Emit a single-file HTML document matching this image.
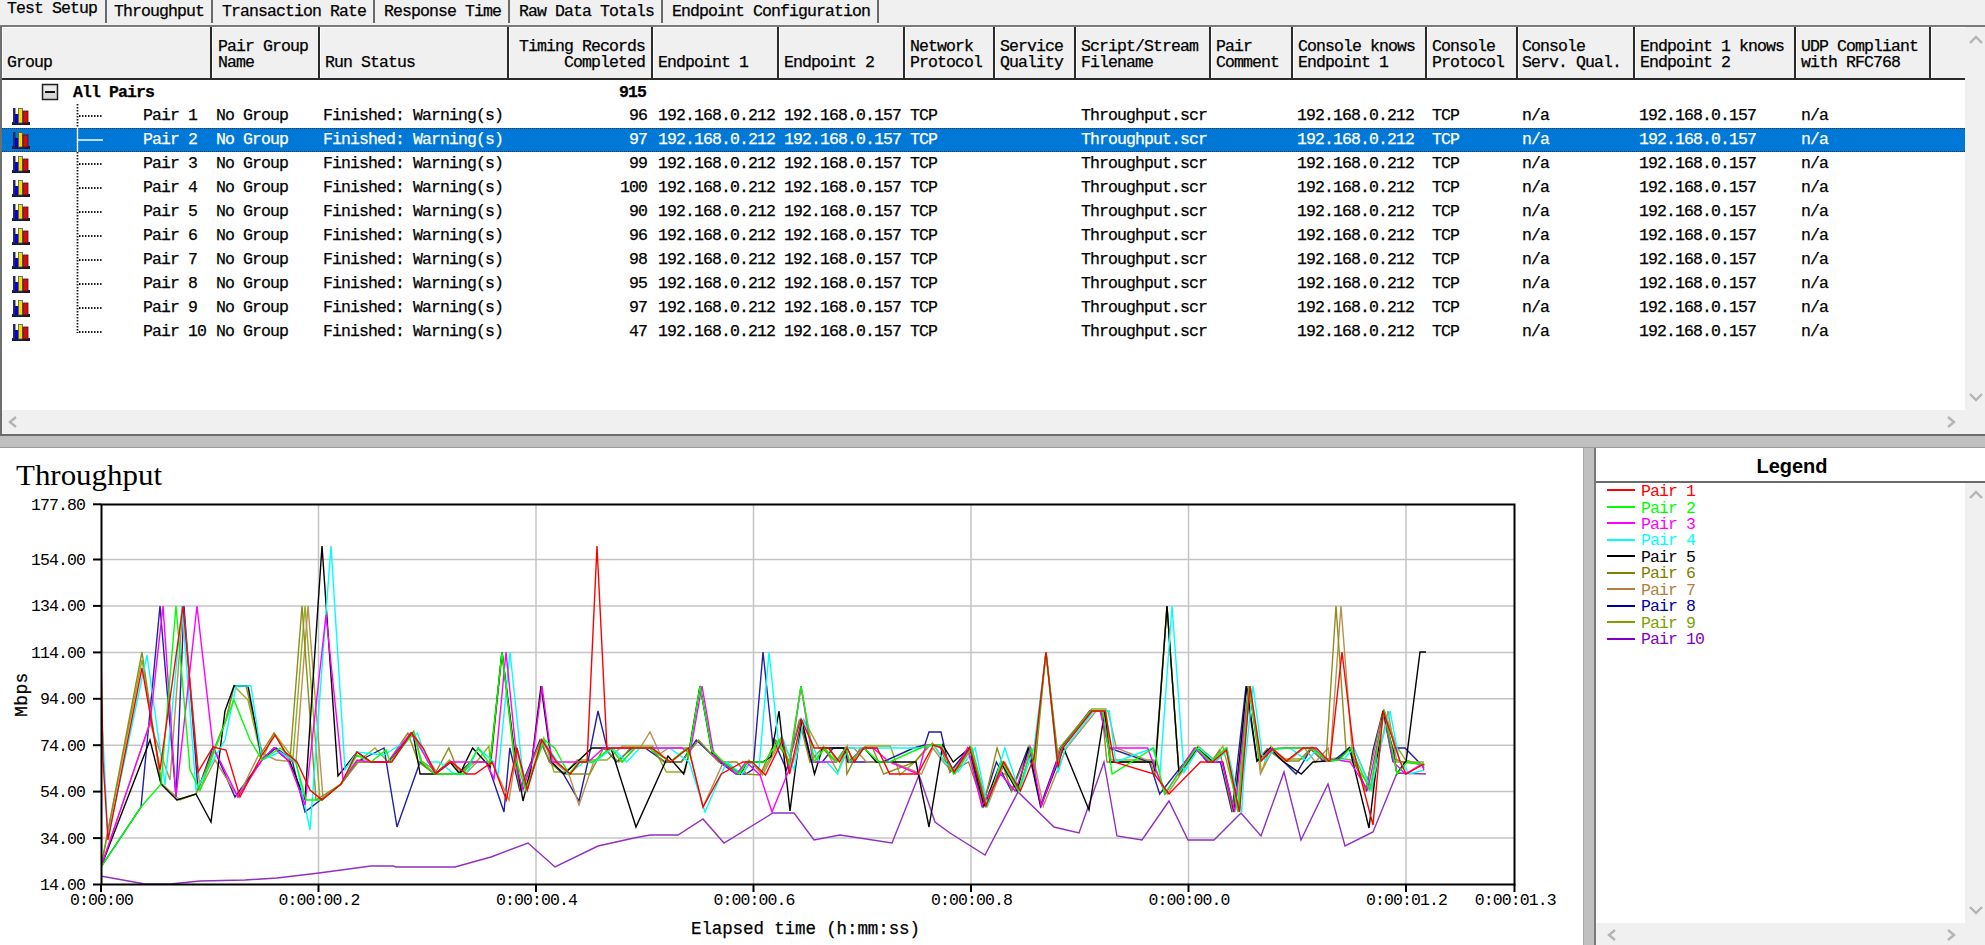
<!DOCTYPE html><html><head><meta charset="utf-8"><style>
*{box-sizing:border-box}
html,body{margin:0;padding:0;width:1985px;height:945px;overflow:hidden;background:#f0f0f0;position:relative}
.a{position:absolute}
.m{position:absolute;font-family:"Liberation Mono",monospace;font-size:16.5px;letter-spacing:-0.9px;-webkit-text-stroke:0.25px currentColor;white-space:pre;line-height:16px;color:#000}
.b{font-weight:bold}
.vl{position:absolute;background:#6a6a6a}
</style></head><body>
<div class="m" style="left:7px;top:1px">Test Setup</div>
<div class="vl" style="left:105px;top:0;width:2px;height:23px"></div>
<div class="m" style="left:114px;top:4px">Throughput</div>
<div class="vl" style="left:211px;top:0;width:2px;height:23px"></div>
<div class="m" style="left:222px;top:4px">Transaction Rate</div>
<div class="vl" style="left:373px;top:0;width:2px;height:23px"></div>
<div class="m" style="left:384px;top:4px">Response Time</div>
<div class="vl" style="left:508px;top:0;width:2px;height:23px"></div>
<div class="m" style="left:519px;top:4px">Raw Data Totals</div>
<div class="vl" style="left:661px;top:0;width:2px;height:23px"></div>
<div class="m" style="left:672px;top:4px">Endpoint Configuration</div>
<div class="vl" style="left:877px;top:0;width:2px;height:23px"></div>
<div class="a" style="left:0;top:25px;width:1985px;height:2px;background:#7a7a7a"></div>
<div class="a" style="left:0;top:26px;width:2px;height:410px;background:#6e6e6e"></div>
<div class="a" style="left:2px;top:80px;width:1963px;height:330px;background:#fff"></div>
<div class="a" style="left:2px;top:27px;width:1963px;height:52px;background:#f0f0f0"></div>
<div class="a" style="left:2px;top:78px;width:1963px;height:2px;background:#2a2a2a"></div>
<div class="a" style="left:2px;top:27px;width:1963px;height:1px;background:#fff"></div>
<div class="a" style="left:2px;top:27px;width:1px;height:51px;background:#fff"></div>
<div class="a" style="left:212px;top:27px;width:1px;height:51px;background:#fff"></div>
<div class="a" style="left:320px;top:27px;width:1px;height:51px;background:#fff"></div>
<div class="a" style="left:509px;top:27px;width:1px;height:51px;background:#fff"></div>
<div class="a" style="left:653px;top:27px;width:1px;height:51px;background:#fff"></div>
<div class="a" style="left:779px;top:27px;width:1px;height:51px;background:#fff"></div>
<div class="a" style="left:905px;top:27px;width:1px;height:51px;background:#fff"></div>
<div class="a" style="left:995px;top:27px;width:1px;height:51px;background:#fff"></div>
<div class="a" style="left:1076px;top:27px;width:1px;height:51px;background:#fff"></div>
<div class="a" style="left:1211px;top:27px;width:1px;height:51px;background:#fff"></div>
<div class="a" style="left:1293px;top:27px;width:1px;height:51px;background:#fff"></div>
<div class="a" style="left:1427px;top:27px;width:1px;height:51px;background:#fff"></div>
<div class="a" style="left:1518px;top:27px;width:1px;height:51px;background:#fff"></div>
<div class="a" style="left:1635px;top:27px;width:1px;height:51px;background:#fff"></div>
<div class="a" style="left:1796px;top:27px;width:1px;height:51px;background:#fff"></div>
<div class="a" style="left:1931px;top:27px;width:1px;height:51px;background:#fff"></div>
<div class="a" style="left:210px;top:27px;width:2px;height:52px;background:#2a2a2a"></div>
<div class="a" style="left:318px;top:27px;width:2px;height:52px;background:#2a2a2a"></div>
<div class="a" style="left:507px;top:27px;width:2px;height:52px;background:#2a2a2a"></div>
<div class="a" style="left:651px;top:27px;width:2px;height:52px;background:#2a2a2a"></div>
<div class="a" style="left:777px;top:27px;width:2px;height:52px;background:#2a2a2a"></div>
<div class="a" style="left:903px;top:27px;width:2px;height:52px;background:#2a2a2a"></div>
<div class="a" style="left:993px;top:27px;width:2px;height:52px;background:#2a2a2a"></div>
<div class="a" style="left:1074px;top:27px;width:2px;height:52px;background:#2a2a2a"></div>
<div class="a" style="left:1209px;top:27px;width:2px;height:52px;background:#2a2a2a"></div>
<div class="a" style="left:1291px;top:27px;width:2px;height:52px;background:#2a2a2a"></div>
<div class="a" style="left:1425px;top:27px;width:2px;height:52px;background:#2a2a2a"></div>
<div class="a" style="left:1516px;top:27px;width:2px;height:52px;background:#2a2a2a"></div>
<div class="a" style="left:1633px;top:27px;width:2px;height:52px;background:#2a2a2a"></div>
<div class="a" style="left:1794px;top:27px;width:2px;height:52px;background:#2a2a2a"></div>
<div class="a" style="left:1929px;top:27px;width:2px;height:52px;background:#2a2a2a"></div>
<div class="m" style="left:7px;top:39px">
Group</div>
<div class="m" style="left:218px;top:39px">Pair Group
Name</div>
<div class="m" style="left:325px;top:39px">
Run Status</div>
<div class="m" style="right:1340px;top:39px;text-align:right">Timing Records
Completed</div>
<div class="m" style="left:658px;top:39px">
Endpoint 1</div>
<div class="m" style="left:784px;top:39px">
Endpoint 2</div>
<div class="m" style="left:910px;top:39px">Network
Protocol</div>
<div class="m" style="left:1000px;top:39px">Service
Quality</div>
<div class="m" style="left:1081px;top:39px">Script/Stream
Filename</div>
<div class="m" style="left:1216px;top:39px">Pair
Comment</div>
<div class="m" style="left:1298px;top:39px">Console knows
Endpoint 1</div>
<div class="m" style="left:1432px;top:39px">Console
Protocol</div>
<div class="m" style="left:1522px;top:39px">Console
Serv. Qual.</div>
<div class="m" style="left:1640px;top:39px">Endpoint 1 knows
Endpoint 2</div>
<div class="m" style="left:1801px;top:39px">UDP Compliant
with RFC768</div>
<div class="a" style="left:2px;top:410px;width:1983px;height:24px;background:#f0f0f0"></div>
<div class="a" style="left:1965px;top:27px;width:20px;height:383px;background:#f0f0f0"></div>
<div class="a" style="left:0;top:434px;width:1985px;height:2px;background:#6b6b6b"></div>
<div class="a" style="left:0;top:436px;width:1985px;height:11px;background:#c0c0c0"></div>
<div class="a" style="left:0;top:447px;width:1985px;height:1px;background:#9a9a9a"></div>
<div class="m b" style="left:73px;top:84.5px">All Pairs</div>
<div class="m b" style="right:1339px;top:84.5px;text-align:right">915</div>
<div class="m" style="left:143px;top:108px;color:#000">Pair 1</div>
<div class="m" style="left:216px;top:108px;color:#000">No Group</div>
<div class="m" style="left:323px;top:108px;color:#000">Finished: Warning(s)</div>
<div class="m" style="right:1338px;top:108px;color:#000">96</div>
<div class="m" style="left:658px;top:108px;color:#000">192.168.0.212</div>
<div class="m" style="left:784px;top:108px;color:#000">192.168.0.157</div>
<div class="m" style="left:910px;top:108px;color:#000">TCP</div>
<div class="m" style="left:1081px;top:108px;color:#000">Throughput.scr</div>
<div class="m" style="left:1297px;top:108px;color:#000">192.168.0.212</div>
<div class="m" style="left:1432px;top:108px;color:#000">TCP</div>
<div class="m" style="left:1522px;top:108px;color:#000">n/a</div>
<div class="m" style="left:1639px;top:108px;color:#000">192.168.0.157</div>
<div class="m" style="left:1801px;top:108px;color:#000">n/a</div>
<div class="a" style="left:2px;top:128px;width:1963px;height:24px;background:#0078d7"></div>
<div class="a" style="left:2px;top:128px;width:1963px;height:24px;border-top:1px dotted #333;border-bottom:1px dotted #333"></div>
<div class="m" style="left:143px;top:132px;color:#fff">Pair 2</div>
<div class="m" style="left:216px;top:132px;color:#fff">No Group</div>
<div class="m" style="left:323px;top:132px;color:#fff">Finished: Warning(s)</div>
<div class="m" style="right:1338px;top:132px;color:#fff">97</div>
<div class="m" style="left:658px;top:132px;color:#fff">192.168.0.212</div>
<div class="m" style="left:784px;top:132px;color:#fff">192.168.0.157</div>
<div class="m" style="left:910px;top:132px;color:#fff">TCP</div>
<div class="m" style="left:1081px;top:132px;color:#fff">Throughput.scr</div>
<div class="m" style="left:1297px;top:132px;color:#fff">192.168.0.212</div>
<div class="m" style="left:1432px;top:132px;color:#fff">TCP</div>
<div class="m" style="left:1522px;top:132px;color:#fff">n/a</div>
<div class="m" style="left:1639px;top:132px;color:#fff">192.168.0.157</div>
<div class="m" style="left:1801px;top:132px;color:#fff">n/a</div>
<div class="m" style="left:143px;top:156px;color:#000">Pair 3</div>
<div class="m" style="left:216px;top:156px;color:#000">No Group</div>
<div class="m" style="left:323px;top:156px;color:#000">Finished: Warning(s)</div>
<div class="m" style="right:1338px;top:156px;color:#000">99</div>
<div class="m" style="left:658px;top:156px;color:#000">192.168.0.212</div>
<div class="m" style="left:784px;top:156px;color:#000">192.168.0.157</div>
<div class="m" style="left:910px;top:156px;color:#000">TCP</div>
<div class="m" style="left:1081px;top:156px;color:#000">Throughput.scr</div>
<div class="m" style="left:1297px;top:156px;color:#000">192.168.0.212</div>
<div class="m" style="left:1432px;top:156px;color:#000">TCP</div>
<div class="m" style="left:1522px;top:156px;color:#000">n/a</div>
<div class="m" style="left:1639px;top:156px;color:#000">192.168.0.157</div>
<div class="m" style="left:1801px;top:156px;color:#000">n/a</div>
<div class="m" style="left:143px;top:180px;color:#000">Pair 4</div>
<div class="m" style="left:216px;top:180px;color:#000">No Group</div>
<div class="m" style="left:323px;top:180px;color:#000">Finished: Warning(s)</div>
<div class="m" style="right:1338px;top:180px;color:#000">100</div>
<div class="m" style="left:658px;top:180px;color:#000">192.168.0.212</div>
<div class="m" style="left:784px;top:180px;color:#000">192.168.0.157</div>
<div class="m" style="left:910px;top:180px;color:#000">TCP</div>
<div class="m" style="left:1081px;top:180px;color:#000">Throughput.scr</div>
<div class="m" style="left:1297px;top:180px;color:#000">192.168.0.212</div>
<div class="m" style="left:1432px;top:180px;color:#000">TCP</div>
<div class="m" style="left:1522px;top:180px;color:#000">n/a</div>
<div class="m" style="left:1639px;top:180px;color:#000">192.168.0.157</div>
<div class="m" style="left:1801px;top:180px;color:#000">n/a</div>
<div class="m" style="left:143px;top:204px;color:#000">Pair 5</div>
<div class="m" style="left:216px;top:204px;color:#000">No Group</div>
<div class="m" style="left:323px;top:204px;color:#000">Finished: Warning(s)</div>
<div class="m" style="right:1338px;top:204px;color:#000">90</div>
<div class="m" style="left:658px;top:204px;color:#000">192.168.0.212</div>
<div class="m" style="left:784px;top:204px;color:#000">192.168.0.157</div>
<div class="m" style="left:910px;top:204px;color:#000">TCP</div>
<div class="m" style="left:1081px;top:204px;color:#000">Throughput.scr</div>
<div class="m" style="left:1297px;top:204px;color:#000">192.168.0.212</div>
<div class="m" style="left:1432px;top:204px;color:#000">TCP</div>
<div class="m" style="left:1522px;top:204px;color:#000">n/a</div>
<div class="m" style="left:1639px;top:204px;color:#000">192.168.0.157</div>
<div class="m" style="left:1801px;top:204px;color:#000">n/a</div>
<div class="m" style="left:143px;top:228px;color:#000">Pair 6</div>
<div class="m" style="left:216px;top:228px;color:#000">No Group</div>
<div class="m" style="left:323px;top:228px;color:#000">Finished: Warning(s)</div>
<div class="m" style="right:1338px;top:228px;color:#000">96</div>
<div class="m" style="left:658px;top:228px;color:#000">192.168.0.212</div>
<div class="m" style="left:784px;top:228px;color:#000">192.168.0.157</div>
<div class="m" style="left:910px;top:228px;color:#000">TCP</div>
<div class="m" style="left:1081px;top:228px;color:#000">Throughput.scr</div>
<div class="m" style="left:1297px;top:228px;color:#000">192.168.0.212</div>
<div class="m" style="left:1432px;top:228px;color:#000">TCP</div>
<div class="m" style="left:1522px;top:228px;color:#000">n/a</div>
<div class="m" style="left:1639px;top:228px;color:#000">192.168.0.157</div>
<div class="m" style="left:1801px;top:228px;color:#000">n/a</div>
<div class="m" style="left:143px;top:252px;color:#000">Pair 7</div>
<div class="m" style="left:216px;top:252px;color:#000">No Group</div>
<div class="m" style="left:323px;top:252px;color:#000">Finished: Warning(s)</div>
<div class="m" style="right:1338px;top:252px;color:#000">98</div>
<div class="m" style="left:658px;top:252px;color:#000">192.168.0.212</div>
<div class="m" style="left:784px;top:252px;color:#000">192.168.0.157</div>
<div class="m" style="left:910px;top:252px;color:#000">TCP</div>
<div class="m" style="left:1081px;top:252px;color:#000">Throughput.scr</div>
<div class="m" style="left:1297px;top:252px;color:#000">192.168.0.212</div>
<div class="m" style="left:1432px;top:252px;color:#000">TCP</div>
<div class="m" style="left:1522px;top:252px;color:#000">n/a</div>
<div class="m" style="left:1639px;top:252px;color:#000">192.168.0.157</div>
<div class="m" style="left:1801px;top:252px;color:#000">n/a</div>
<div class="m" style="left:143px;top:276px;color:#000">Pair 8</div>
<div class="m" style="left:216px;top:276px;color:#000">No Group</div>
<div class="m" style="left:323px;top:276px;color:#000">Finished: Warning(s)</div>
<div class="m" style="right:1338px;top:276px;color:#000">95</div>
<div class="m" style="left:658px;top:276px;color:#000">192.168.0.212</div>
<div class="m" style="left:784px;top:276px;color:#000">192.168.0.157</div>
<div class="m" style="left:910px;top:276px;color:#000">TCP</div>
<div class="m" style="left:1081px;top:276px;color:#000">Throughput.scr</div>
<div class="m" style="left:1297px;top:276px;color:#000">192.168.0.212</div>
<div class="m" style="left:1432px;top:276px;color:#000">TCP</div>
<div class="m" style="left:1522px;top:276px;color:#000">n/a</div>
<div class="m" style="left:1639px;top:276px;color:#000">192.168.0.157</div>
<div class="m" style="left:1801px;top:276px;color:#000">n/a</div>
<div class="m" style="left:143px;top:300px;color:#000">Pair 9</div>
<div class="m" style="left:216px;top:300px;color:#000">No Group</div>
<div class="m" style="left:323px;top:300px;color:#000">Finished: Warning(s)</div>
<div class="m" style="right:1338px;top:300px;color:#000">97</div>
<div class="m" style="left:658px;top:300px;color:#000">192.168.0.212</div>
<div class="m" style="left:784px;top:300px;color:#000">192.168.0.157</div>
<div class="m" style="left:910px;top:300px;color:#000">TCP</div>
<div class="m" style="left:1081px;top:300px;color:#000">Throughput.scr</div>
<div class="m" style="left:1297px;top:300px;color:#000">192.168.0.212</div>
<div class="m" style="left:1432px;top:300px;color:#000">TCP</div>
<div class="m" style="left:1522px;top:300px;color:#000">n/a</div>
<div class="m" style="left:1639px;top:300px;color:#000">192.168.0.157</div>
<div class="m" style="left:1801px;top:300px;color:#000">n/a</div>
<div class="m" style="left:143px;top:324px;color:#000">Pair 10</div>
<div class="m" style="left:216px;top:324px;color:#000">No Group</div>
<div class="m" style="left:323px;top:324px;color:#000">Finished: Warning(s)</div>
<div class="m" style="right:1338px;top:324px;color:#000">47</div>
<div class="m" style="left:658px;top:324px;color:#000">192.168.0.212</div>
<div class="m" style="left:784px;top:324px;color:#000">192.168.0.157</div>
<div class="m" style="left:910px;top:324px;color:#000">TCP</div>
<div class="m" style="left:1081px;top:324px;color:#000">Throughput.scr</div>
<div class="m" style="left:1297px;top:324px;color:#000">192.168.0.212</div>
<div class="m" style="left:1432px;top:324px;color:#000">TCP</div>
<div class="m" style="left:1522px;top:324px;color:#000">n/a</div>
<div class="m" style="left:1639px;top:324px;color:#000">192.168.0.157</div>
<div class="m" style="left:1801px;top:324px;color:#000">n/a</div>
<div class="a" style="left:0;top:448px;width:1583px;height:497px;background:#fff"></div>
<div class="a" style="left:1583px;top:448px;width:13px;height:497px;background:#c0c0c0"></div>
<div class="a" style="left:1583px;top:448px;width:1px;height:497px;background:#a8a8a8"></div>
<div class="a" style="left:1596px;top:448px;width:389px;height:497px;background:#fff"></div>
<svg class="a" style="left:0;top:80px" width="140" height="270" viewBox="0 80 140 270"><rect x="42.5" y="84.5" width="15" height="15" fill="#d8d8d8" stroke="#222" stroke-width="1.5"/><rect x="44" y="86" width="12" height="6" fill="#ececec"/><rect x="45" y="91" width="10" height="2" fill="#111"/><line x1="77.5" y1="104" x2="77.5" y2="333" stroke="#1a1a1a" stroke-width="1.8" stroke-dasharray="1.5 1.5"/><line x1="79" y1="116" x2="103" y2="116" stroke="#1a1a1a" stroke-width="1.8" stroke-dasharray="1.5 1.5"/><g transform="translate(12,107)"><rect x="0" y="15" width="18" height="3" fill="#1a1a3a"/><rect x="1" y="1" width="2.5" height="15" fill="#2a2a5a"/><rect x="3" y="7" width="3.5" height="9" fill="#0000e0"/><rect x="6.5" y="1.5" width="4" height="14.5" fill="#f0e000" stroke="#555" stroke-width="0.8"/><rect x="11" y="4" width="5" height="12" fill="#d01010" stroke="#501010" stroke-width="0.8"/></g><line x1="77.5" y1="128" x2="77.5" y2="152" stroke="#fff" stroke-width="1.5"/><line x1="77" y1="140" x2="103" y2="140" stroke="#fff" stroke-width="1.5"/><g transform="translate(12,131)"><rect x="0" y="15" width="18" height="3" fill="#1a1a3a"/><rect x="1" y="1" width="2.5" height="15" fill="#2a2a5a"/><rect x="3" y="7" width="3.5" height="9" fill="#0000e0"/><rect x="6.5" y="1.5" width="4" height="14.5" fill="#f0e000" stroke="#555" stroke-width="0.8"/><rect x="11" y="4" width="5" height="12" fill="#d01010" stroke="#501010" stroke-width="0.8"/></g><line x1="79" y1="164" x2="103" y2="164" stroke="#1a1a1a" stroke-width="1.8" stroke-dasharray="1.5 1.5"/><g transform="translate(12,155)"><rect x="0" y="15" width="18" height="3" fill="#1a1a3a"/><rect x="1" y="1" width="2.5" height="15" fill="#2a2a5a"/><rect x="3" y="7" width="3.5" height="9" fill="#0000e0"/><rect x="6.5" y="1.5" width="4" height="14.5" fill="#f0e000" stroke="#555" stroke-width="0.8"/><rect x="11" y="4" width="5" height="12" fill="#d01010" stroke="#501010" stroke-width="0.8"/></g><line x1="79" y1="188" x2="103" y2="188" stroke="#1a1a1a" stroke-width="1.8" stroke-dasharray="1.5 1.5"/><g transform="translate(12,179)"><rect x="0" y="15" width="18" height="3" fill="#1a1a3a"/><rect x="1" y="1" width="2.5" height="15" fill="#2a2a5a"/><rect x="3" y="7" width="3.5" height="9" fill="#0000e0"/><rect x="6.5" y="1.5" width="4" height="14.5" fill="#f0e000" stroke="#555" stroke-width="0.8"/><rect x="11" y="4" width="5" height="12" fill="#d01010" stroke="#501010" stroke-width="0.8"/></g><line x1="79" y1="212" x2="103" y2="212" stroke="#1a1a1a" stroke-width="1.8" stroke-dasharray="1.5 1.5"/><g transform="translate(12,203)"><rect x="0" y="15" width="18" height="3" fill="#1a1a3a"/><rect x="1" y="1" width="2.5" height="15" fill="#2a2a5a"/><rect x="3" y="7" width="3.5" height="9" fill="#0000e0"/><rect x="6.5" y="1.5" width="4" height="14.5" fill="#f0e000" stroke="#555" stroke-width="0.8"/><rect x="11" y="4" width="5" height="12" fill="#d01010" stroke="#501010" stroke-width="0.8"/></g><line x1="79" y1="236" x2="103" y2="236" stroke="#1a1a1a" stroke-width="1.8" stroke-dasharray="1.5 1.5"/><g transform="translate(12,227)"><rect x="0" y="15" width="18" height="3" fill="#1a1a3a"/><rect x="1" y="1" width="2.5" height="15" fill="#2a2a5a"/><rect x="3" y="7" width="3.5" height="9" fill="#0000e0"/><rect x="6.5" y="1.5" width="4" height="14.5" fill="#f0e000" stroke="#555" stroke-width="0.8"/><rect x="11" y="4" width="5" height="12" fill="#d01010" stroke="#501010" stroke-width="0.8"/></g><line x1="79" y1="260" x2="103" y2="260" stroke="#1a1a1a" stroke-width="1.8" stroke-dasharray="1.5 1.5"/><g transform="translate(12,251)"><rect x="0" y="15" width="18" height="3" fill="#1a1a3a"/><rect x="1" y="1" width="2.5" height="15" fill="#2a2a5a"/><rect x="3" y="7" width="3.5" height="9" fill="#0000e0"/><rect x="6.5" y="1.5" width="4" height="14.5" fill="#f0e000" stroke="#555" stroke-width="0.8"/><rect x="11" y="4" width="5" height="12" fill="#d01010" stroke="#501010" stroke-width="0.8"/></g><line x1="79" y1="284" x2="103" y2="284" stroke="#1a1a1a" stroke-width="1.8" stroke-dasharray="1.5 1.5"/><g transform="translate(12,275)"><rect x="0" y="15" width="18" height="3" fill="#1a1a3a"/><rect x="1" y="1" width="2.5" height="15" fill="#2a2a5a"/><rect x="3" y="7" width="3.5" height="9" fill="#0000e0"/><rect x="6.5" y="1.5" width="4" height="14.5" fill="#f0e000" stroke="#555" stroke-width="0.8"/><rect x="11" y="4" width="5" height="12" fill="#d01010" stroke="#501010" stroke-width="0.8"/></g><line x1="79" y1="308" x2="103" y2="308" stroke="#1a1a1a" stroke-width="1.8" stroke-dasharray="1.5 1.5"/><g transform="translate(12,299)"><rect x="0" y="15" width="18" height="3" fill="#1a1a3a"/><rect x="1" y="1" width="2.5" height="15" fill="#2a2a5a"/><rect x="3" y="7" width="3.5" height="9" fill="#0000e0"/><rect x="6.5" y="1.5" width="4" height="14.5" fill="#f0e000" stroke="#555" stroke-width="0.8"/><rect x="11" y="4" width="5" height="12" fill="#d01010" stroke="#501010" stroke-width="0.8"/></g><line x1="79" y1="332" x2="103" y2="332" stroke="#1a1a1a" stroke-width="1.8" stroke-dasharray="1.5 1.5"/><g transform="translate(12,323)"><rect x="0" y="15" width="18" height="3" fill="#1a1a3a"/><rect x="1" y="1" width="2.5" height="15" fill="#2a2a5a"/><rect x="3" y="7" width="3.5" height="9" fill="#0000e0"/><rect x="6.5" y="1.5" width="4" height="14.5" fill="#f0e000" stroke="#555" stroke-width="0.8"/><rect x="11" y="4" width="5" height="12" fill="#d01010" stroke="#501010" stroke-width="0.8"/></g></svg>
<svg class="a" style="left:0;top:448px" width="1583" height="497" viewBox="0 448 1583 497"><line x1="102" y1="559.5" x2="1514" y2="559.5" stroke="#c4c4c4" stroke-width="1.5"/><line x1="102" y1="605.9" x2="1514" y2="605.9" stroke="#c4c4c4" stroke-width="1.5"/><line x1="102" y1="652.4" x2="1514" y2="652.4" stroke="#c4c4c4" stroke-width="1.5"/><line x1="102" y1="698.8" x2="1514" y2="698.8" stroke="#c4c4c4" stroke-width="1.5"/><line x1="102" y1="745.2" x2="1514" y2="745.2" stroke="#c4c4c4" stroke-width="1.5"/><line x1="102" y1="791.6" x2="1514" y2="791.6" stroke="#c4c4c4" stroke-width="1.5"/><line x1="102" y1="838.1" x2="1514" y2="838.1" stroke="#c4c4c4" stroke-width="1.5"/><line x1="318.5" y1="505" x2="318.5" y2="884" stroke="#c4c4c4" stroke-width="1.5"/><line x1="536.0" y1="505" x2="536.0" y2="884" stroke="#c4c4c4" stroke-width="1.5"/><line x1="753.5" y1="505" x2="753.5" y2="884" stroke="#c4c4c4" stroke-width="1.5"/><line x1="971.0" y1="505" x2="971.0" y2="884" stroke="#c4c4c4" stroke-width="1.5"/><line x1="1188.5" y1="505" x2="1188.5" y2="884" stroke="#c4c4c4" stroke-width="1.5"/><line x1="1406.0" y1="505" x2="1406.0" y2="884" stroke="#c4c4c4" stroke-width="1.5"/><g clip-path="url(#pc)"><clipPath id="pc"><rect x="102" y="504" width="1412" height="381"/></clipPath><polyline points="101.0,876.0 145.0,884.0 170.0,884.0 200.0,881.0 245.0,880.0 277.0,878.0 319.0,873.0 371.0,866.0 393.0,866.0 396.0,867.0 455.0,867.0 491.0,857.0 528.0,843.0 555.0,867.0 598.0,846.0 634.0,838.0 650.0,835.0 678.0,835.0 703.0,819.0 724.0,843.0 773.0,813.0 794.0,813.0 814.0,840.0 840.0,835.0 892.0,843.0 919.0,775.0 935.0,822.0 950.0,833.0 985.0,855.0 1018.0,792.0 1054.0,827.0 1079.0,833.0 1104.0,762.0 1117.0,836.0 1142.0,840.0 1169.0,801.0 1188.0,840.0 1214.0,840.0 1241.0,813.0 1261.0,836.0 1284.0,772.0 1301.0,840.0 1328.0,784.0 1345.0,846.0 1373.0,832.0 1397.0,773.0 1426.0,774.0" fill="none" stroke="#9030c0" stroke-width="1.4" stroke-linejoin="miter"/><polyline points="101.0,867.0 142.0,660.0 162.0,784.0 180.0,800.0 196.0,794.0 226.0,720.0 234.0,686.0 248.0,700.0 262.0,760.0 274.0,733.0 293.0,758.0 305.0,606.0 320.0,800.0 341.0,784.0 360.0,760.0 375.0,748.0 388.0,762.0 413.8,731.0 420.3,760.0 437.3,772.0 449.4,760.0 461.8,772.0 477.9,760.0 489.0,746.0 490.0,762.4 502.0,652.0 514.0,751.2 516.2,746.0 525.4,788.0 543.8,738.0 554.0,772.0 566.1,772.0 577.0,760.0 589.9,760.0 606.9,760.0 622.4,746.0 634.3,746.0 652.4,746.0 666.4,772.0 685.0,772.0 688.0,757.1 700.0,686.0 712.0,749.5 720.4,760.0 739.6,772.0 748.8,760.0 761.8,773.0 780.9,738.0 789.0,762.5 801.0,686.0 813.0,753.5 817.1,760.0 823.5,746.0 838.0,772.0 847.2,746.0 851.7,760.0 865.6,746.0 878.5,746.0 890.4,746.0 900.0,775.0 916.8,760.0 932.4,743.0 943.7,760.0 953.2,770.0 970.2,746.0 985.1,804.0 1000.3,772.0 1016.0,780.0 1029.3,746.0 1034.0,760.5 1046.0,652.0 1058.0,762.6 1063.0,746.0 1091.6,709.0 1105.8,709.0 1111.0,760.0 1153.8,760.0 1155.0,766.9 1167.0,606.0 1179.0,773.3 1198.0,746.0 1214.4,760.0 1222.7,746.0 1238.9,810.0 1239.0,790.6 1249.0,686.0 1259.0,751.5 1261.3,772.0 1271.0,746.0 1282.7,759.0 1303.0,759.0 1312.1,747.0 1325.2,759.0 1338.9,758.0 1351.0,760.0 1371.0,788.0 1383.7,709.0 1396.3,746.0 1405.6,760.0 1424.0,766.0" fill="none" stroke="#90b020" stroke-width="1.4" stroke-linejoin="miter"/><polyline points="101.0,867.0 141.0,807.0 160.0,606.0 176.0,797.0 184.0,606.0 198.0,790.0 213.0,747.0 235.0,797.0 262.0,760.0 276.0,748.0 292.0,760.0 305.0,812.0 341.0,784.0 357.0,762.0 384.0,748.0 397.0,827.0 420.0,762.0 435.0,774.0 444.6,774.0 457.5,774.0 470.9,762.0 487.0,762.0 504.0,812.0 509.8,748.0 519.7,790.0 540.0,740.0 549.8,762.0 563.3,774.0 579.0,801.0 588.0,761.2 598.0,711.0 608.0,752.0 616.6,762.0 632.2,748.0 645.1,748.0 665.3,762.0 681.4,762.0 696.3,740.0 719.3,762.0 736.1,774.0 745.9,774.0 753.0,769.4 763.0,652.0 773.0,746.2 773.7,740.0 786.6,770.0 800.2,720.0 811.0,762.0 822.3,762.0 833.2,748.0 844.1,748.0 847.5,762.0 859.8,762.0 870.9,762.0 882.8,762.0 913.6,748.0 924.8,745.0 929.0,732.0 941.0,732.0 950.0,772.0 969.1,748.0 982.3,806.0 996.4,762.0 1011.5,791.0 1028.0,748.0 1040.4,806.0 1061.2,748.0 1089.6,711.0 1100.6,711.0 1108.8,748.0 1149.4,762.0 1159.7,794.0 1195.7,748.0 1207.4,762.0 1220.4,762.0 1232.0,812.0 1246.0,686.0 1256.8,761.0 1267.8,749.0 1283.0,761.0 1296.1,774.0 1310.9,749.0 1323.2,761.0 1334.6,760.0 1349.0,748.0 1366.3,790.0 1373.0,750.5 1383.0,711.0 1393.0,762.0 1394.4,748.0 1405.0,748.0 1420.7,764.0 1424.0,768.0" fill="none" stroke="#2020a0" stroke-width="1.4" stroke-linejoin="miter"/><polyline points="101.0,867.0 150.0,723.0 170.0,780.0 183.0,606.0 200.0,790.0 215.0,760.0 238.0,797.0 260.0,752.0 276.0,760.0 296.0,762.0 308.0,606.0 323.0,798.0 341.0,784.0 357.0,762.0 388.0,762.0 413.7,733.0 421.5,748.0 437.7,774.0 453.7,774.0 465.2,774.0 477.1,762.0 492.0,762.0 509.0,800.0 517.1,748.0 527.2,790.0 541.6,740.0 554.5,762.0 568.8,774.0 579.0,805.0 593.6,762.0 610.7,748.0 621.6,762.0 635.6,748.0 640.0,748.0 650.0,732.0 660.0,753.8 668.6,748.0 688.5,748.0 703.0,807.0 723.4,762.0 742.0,774.0 750.9,762.0 762.5,775.0 781.0,740.0 793.2,762.0 804.0,720.0 819.1,748.0 829.1,748.0 836.9,762.0 848.0,748.0 853.8,748.0 866.6,762.0 879.1,762.0 892.0,762.0 921.5,774.0 932.9,748.0 943.2,762.0 955.0,774.0 971.9,748.0 987.5,806.0 1004.9,762.0 1019.0,791.0 1031.5,748.0 1043.3,806.0 1066.4,748.0 1096.2,711.0 1108.0,711.0 1116.3,748.0 1152.0,762.0 1167.3,794.0 1198.2,748.0 1215.5,762.0 1227.1,748.0 1237.9,812.0 1250.4,686.0 1260.4,774.0 1273.0,749.0 1287.6,761.0 1304.5,748.0 1315.4,762.0 1328.1,748.0 1330.0,760.8 1341.0,606.0 1352.0,749.0 1353.9,748.0 1371.9,790.0 1388.0,711.0 1396.8,762.0 1407.9,762.0 1424.0,762.0" fill="none" stroke="#b89050" stroke-width="1.4" stroke-linejoin="miter"/><polyline points="101.0,867.0 142.0,652.0 161.0,784.0 177.0,800.0 196.0,794.0 226.0,720.0 234.0,686.0 246.0,686.0 262.0,752.0 274.0,733.0 290.0,760.0 302.0,606.0 316.0,800.0 341.0,784.0 357.0,762.0 388.0,762.0 407.9,733.0 418.3,762.0 434.9,774.0 448.8,748.0 459.3,774.0 471.4,762.0 487.0,762.0 490.0,771.5 502.0,652.0 514.0,757.3 520.5,790.0 541.1,740.0 549.3,762.0 564.5,774.0 574.6,774.0 589.7,774.0 603.7,748.0 618.6,762.0 630.5,748.0 649.5,748.0 663.8,762.0 681.4,762.0 698.6,740.0 718.6,762.0 736.8,762.0 746.6,774.0 760.1,775.0 775.7,740.0 788.8,762.0 799.3,720.0 809.9,762.0 822.1,748.0 835.7,762.0 845.5,748.0 846.9,774.0 860.1,748.0 872.6,748.0 883.6,774.0 915.0,762.0 928.9,745.0 939.2,745.0 950.1,772.0 968.6,762.0 983.4,806.0 997.1,748.0 1011.7,791.0 1029.7,748.0 1034.0,777.0 1046.0,652.0 1058.0,756.3 1059.4,748.0 1090.1,711.0 1102.0,711.0 1106.9,762.0 1150.4,762.0 1155.0,775.7 1167.0,606.0 1179.0,771.0 1195.3,748.0 1211.3,762.0 1219.5,750.0 1232.8,812.0 1239.0,763.5 1249.0,686.0 1259.0,759.0 1266.9,749.0 1283.1,761.0 1298.8,761.0 1310.1,749.0 1324.6,761.0 1326.0,760.8 1336.0,606.0 1346.0,750.0 1350.0,748.0 1365.2,790.0 1373.0,756.1 1383.0,711.0 1393.0,758.1 1402.0,762.0 1420.2,764.0 1424.0,766.0" fill="none" stroke="#8c8c20" stroke-width="1.4" stroke-linejoin="miter"/><polyline points="101.0,867.0 150.0,740.0 161.0,784.0 177.0,800.0 196.0,794.0 211.0,822.0 225.0,711.0 234.0,686.0 248.0,686.0 262.0,760.0 274.0,748.0 290.0,762.0 305.0,800.0 322.0,546.0 338.0,776.0 357.0,752.0 371.0,762.0 388.0,762.0 412.9,733.0 420.1,774.0 435.0,774.0 450.0,762.0 459.8,774.0 472.6,748.0 490.0,766.8 502.0,652.0 514.0,748.0 514.1,748.0 523.0,801.0 531.0,767.8 541.0,686.0 551.0,758.3 551.7,762.0 563.9,774.0 577.1,762.0 592.0,748.0 611.0,748.0 636.0,827.0 668.0,756.0 683.7,774.0 688.0,757.6 700.0,686.0 712.0,752.6 721.2,762.0 740.4,774.0 747.2,762.0 762.9,762.0 771.0,756.5 779.0,711.0 790.0,811.0 801.7,720.0 814.5,774.0 822.5,748.0 837.1,748.0 843.8,748.0 848.5,762.0 864.3,748.0 876.4,762.0 887.6,762.0 916.0,762.0 929.0,827.0 942.7,745.0 953.2,762.0 969.6,748.0 984.0,806.0 1000.8,762.0 1017.1,791.0 1028.4,748.0 1040.9,806.0 1063.6,748.0 1089.0,810.0 1104.8,711.0 1110.0,762.0 1152.8,762.0 1155.0,771.1 1167.0,606.0 1179.0,773.9 1197.4,748.0 1213.3,762.0 1222.7,762.0 1234.2,812.0 1246.7,686.0 1257.1,761.0 1270.2,748.0 1282.6,761.0 1301.3,774.0 1312.9,762.0 1326.3,761.0 1338.0,760.0 1349.5,748.0 1369.0,828.0 1383.0,711.0 1393.0,750.2 1396.9,774.0 1405.0,762.0 1406.0,762.0 1420.0,652.0 1426.0,652.0" fill="none" stroke="#000000" stroke-width="1.4" stroke-linejoin="miter"/><polyline points="101.0,699.0 108.0,838.0 147.0,655.0 165.0,785.0 182.0,606.0 196.0,790.0 225.0,740.0 236.0,686.0 251.0,686.0 262.0,760.0 280.0,752.0 296.0,762.0 310.0,830.0 331.0,546.0 345.0,770.0 357.0,752.0 384.0,755.0 395.0,748.0 417.4,733.0 427.4,762.0 439.0,762.0 454.4,774.0 466.7,774.0 477.8,748.0 493.8,762.0 498.0,776.2 510.0,652.0 522.0,766.7 526.4,790.0 542.9,740.0 557.8,762.0 568.3,774.0 583.9,762.0 594.6,762.0 612.7,748.0 626.8,762.0 639.7,748.0 655.0,748.0 669.4,748.0 689.2,762.0 705.0,812.0 726.6,762.0 741.7,774.0 750.3,762.0 759.0,768.5 769.0,652.0 779.0,748.2 783.5,740.0 793.9,770.0 803.6,720.0 819.3,762.0 826.8,762.0 837.5,774.0 848.5,748.0 855.9,748.0 867.6,748.0 880.3,748.0 893.8,748.0 919.3,748.0 934.5,745.0 944.3,762.0 957.9,772.0 975.2,748.0 987.4,806.0 1004.8,748.0 1019.3,791.0 1034.0,748.0 1046.0,652.0 1058.0,772.9 1065.4,748.0 1093.7,711.0 1109.3,711.0 1115.7,762.0 1152.8,748.0 1160.0,773.4 1172.0,606.0 1184.0,772.4 1198.8,748.0 1215.7,762.0 1227.4,750.0 1241.7,812.0 1244.0,773.2 1253.0,686.0 1262.0,753.5 1265.4,761.0 1274.6,749.0 1290.0,748.0 1307.0,761.0 1317.2,749.0 1327.1,761.0 1343.2,760.0 1353.9,748.0 1371.0,790.0 1381.0,744.9 1390.0,711.0 1399.0,758.1 1400.4,762.0 1409.7,774.0 1424.0,770.0" fill="none" stroke="#00ffff" stroke-width="1.4" stroke-linejoin="miter"/><polyline points="101.0,867.0 150.0,723.0 163.0,606.0 176.0,797.0 197.0,606.0 213.0,747.0 238.0,797.0 262.0,760.0 274.0,748.0 288.0,760.0 305.0,805.0 326.0,615.0 343.0,780.0 357.0,760.0 371.0,762.0 388.0,762.0 410.7,733.0 420.3,748.0 435.2,774.0 450.4,762.0 462.6,762.0 476.3,762.0 485.7,762.0 494.0,778.6 506.0,652.0 518.0,771.3 522.9,790.0 532.0,762.2 542.0,686.0 552.0,762.0 563.1,762.0 575.0,762.0 588.4,762.0 603.5,748.0 618.4,748.0 631.3,748.0 651.5,748.0 665.3,748.0 681.9,748.0 690.0,753.2 702.0,686.0 714.0,755.7 721.9,762.0 736.5,774.0 746.1,762.0 760.0,775.0 772.0,812.0 789.0,770.0 801.0,686.0 813.0,762.0 823.9,762.0 835.7,762.0 845.7,748.0 848.8,762.0 863.0,748.0 873.1,748.0 889.3,762.0 918.0,774.0 925.8,745.0 938.8,745.0 954.6,772.0 967.5,748.0 981.8,806.0 1000.6,774.0 1015.1,791.0 1030.4,748.0 1041.2,806.0 1062.1,748.0 1092.1,711.0 1100.1,711.0 1108.8,748.0 1147.6,748.0 1165.1,794.0 1194.3,748.0 1209.1,762.0 1222.2,762.0 1234.7,812.0 1248.9,686.0 1260.2,761.0 1270.9,749.0 1283.8,748.0 1299.0,748.0 1313.4,748.0 1326.1,761.0 1337.7,760.0 1350.2,762.0 1367.7,790.0 1384.3,711.0 1393.4,762.0 1405.3,774.0 1421.9,764.0 1424.0,770.0" fill="none" stroke="#ff00ff" stroke-width="1.4" stroke-linejoin="miter"/><polyline points="101.0,867.0 141.0,807.0 161.0,784.0 176.0,606.0 190.0,770.0 200.0,790.0 226.0,720.0 234.0,700.0 250.0,740.0 262.0,760.0 280.0,748.0 295.0,760.0 306.0,800.0 322.0,800.0 341.0,784.0 357.0,755.0 371.0,762.0 386.0,750.0 390.0,762.0 413.5,733.0 421.9,762.0 434.9,774.0 448.5,774.0 463.5,774.0 478.4,748.0 490.0,764.4 502.0,652.0 514.0,753.2 525.6,790.0 544.4,740.0 554.6,748.0 568.9,774.0 579.0,762.0 592.9,762.0 610.4,748.0 622.4,762.0 634.3,748.0 649.1,748.0 669.9,762.0 686.8,748.0 688.0,759.1 700.0,686.0 712.0,751.5 723.9,762.0 739.3,774.0 747.1,762.0 764.7,762.0 778.9,740.0 789.0,764.5 801.0,686.0 813.0,755.5 814.2,762.0 824.7,748.0 836.1,762.0 845.7,748.0 849.8,762.0 863.7,748.0 879.1,762.0 889.4,762.0 920.3,748.0 930.1,745.0 941.3,745.0 953.6,774.0 971.3,748.0 986.3,806.0 1002.1,762.0 1018.5,791.0 1031.3,748.0 1034.0,762.5 1046.0,652.0 1058.0,764.6 1062.2,748.0 1091.0,711.0 1103.0,711.0 1112.1,774.0 1153.7,748.0 1164.5,794.0 1196.6,748.0 1210.9,762.0 1226.1,748.0 1237.8,812.0 1249.0,686.0 1259.8,761.0 1273.2,749.0 1284.7,748.0 1304.4,748.0 1312.8,749.0 1327.9,761.0 1338.9,760.0 1350.7,748.0 1369.8,790.0 1384.4,711.0 1397.0,774.0 1407.3,762.0 1423.9,764.0 1424.0,766.0" fill="none" stroke="#00ff00" stroke-width="1.4" stroke-linejoin="miter"/><polyline points="101.0,652.0 103.0,760.0 108.0,840.0 142.0,668.0 160.0,770.0 183.0,606.0 198.0,772.0 213.0,747.0 226.0,750.0 240.0,797.0 262.0,755.0 275.0,735.0 285.0,752.0 297.0,762.0 310.0,790.0 322.0,800.0 341.0,784.0 357.0,752.0 371.0,762.0 388.0,762.0 391.8,762.0 411.3,733.0 423.2,748.0 435.7,774.0 451.3,762.0 466.5,774.0 475.0,774.0 492.2,762.0 506.4,800.0 516.9,748.0 527.3,790.0 541.9,740.0 556.5,762.0 570.3,774.0 579.7,762.0 587.0,762.0 597.0,546.0 607.0,749.6 611.3,748.0 623.1,748.0 636.6,748.0 651.9,748.0 670.6,762.0 688.5,748.0 703.0,807.0 721.3,774.0 742.9,762.0 752.1,762.0 765.5,775.0 782.6,740.0 789.6,774.0 801.5,720.0 814.2,748.0 828.4,748.0 839.5,762.0 847.1,748.0 854.2,762.0 863.7,748.0 877.1,748.0 889.7,774.0 917.7,774.0 933.4,745.0 941.6,748.0 954.2,772.0 969.7,748.0 985.9,806.0 1003.5,762.0 1020.4,791.0 1032.2,762.0 1034.0,757.7 1046.0,652.0 1058.0,767.3 1062.8,748.0 1091.8,711.0 1105.1,711.0 1114.1,762.0 1154.3,774.0 1169.0,794.0 1200.4,762.0 1212.5,762.0 1226.4,750.0 1239.5,812.0 1250.0,686.0 1261.3,761.0 1272.6,749.0 1286.5,761.0 1302.8,748.0 1316.3,748.0 1328.7,761.0 1330.0,760.8 1342.0,652.0 1354.0,752.4 1373.0,825.0 1383.2,711.0 1400.3,762.0 1406.1,774.0 1424.0,764.0" fill="none" stroke="#ff0000" stroke-width="1.4" stroke-linejoin="miter"/></g><path d="M101.5,504.5 H1514.5 V884.5 H101.5 Z" fill="none" stroke="#000" stroke-width="2"/><line x1="93" y1="504.3" x2="101" y2="504.3" stroke="#000" stroke-width="2"/><line x1="93" y1="559.5" x2="101" y2="559.5" stroke="#000" stroke-width="2"/><line x1="93" y1="605.9" x2="101" y2="605.9" stroke="#000" stroke-width="2"/><line x1="93" y1="652.4" x2="101" y2="652.4" stroke="#000" stroke-width="2"/><line x1="93" y1="698.8" x2="101" y2="698.8" stroke="#000" stroke-width="2"/><line x1="93" y1="745.2" x2="101" y2="745.2" stroke="#000" stroke-width="2"/><line x1="93" y1="791.6" x2="101" y2="791.6" stroke="#000" stroke-width="2"/><line x1="93" y1="838.1" x2="101" y2="838.1" stroke="#000" stroke-width="2"/><line x1="93" y1="884.5" x2="101" y2="884.5" stroke="#000" stroke-width="2"/><line x1="101.0" y1="884" x2="101.0" y2="892" stroke="#000" stroke-width="2"/><line x1="318.5" y1="884" x2="318.5" y2="892" stroke="#000" stroke-width="2"/><line x1="536.0" y1="884" x2="536.0" y2="892" stroke="#000" stroke-width="2"/><line x1="753.5" y1="884" x2="753.5" y2="892" stroke="#000" stroke-width="2"/><line x1="971.0" y1="884" x2="971.0" y2="892" stroke="#000" stroke-width="2"/><line x1="1188.5" y1="884" x2="1188.5" y2="892" stroke="#000" stroke-width="2"/><line x1="1406.0" y1="884" x2="1406.0" y2="892" stroke="#000" stroke-width="2"/><line x1="1514.5" y1="884" x2="1514.5" y2="892" stroke="#000" stroke-width="2"/></svg>
<div class="m" style="right:1900px;top:497.8px;-webkit-text-stroke:0">177.80</div>
<div class="m" style="right:1900px;top:553.0px;-webkit-text-stroke:0">154.00</div>
<div class="m" style="right:1900px;top:599.4px;-webkit-text-stroke:0">134.00</div>
<div class="m" style="right:1900px;top:645.9px;-webkit-text-stroke:0">114.00</div>
<div class="m" style="right:1900px;top:692.3px;-webkit-text-stroke:0">94.00</div>
<div class="m" style="right:1900px;top:738.7px;-webkit-text-stroke:0">74.00</div>
<div class="m" style="right:1900px;top:785.1px;-webkit-text-stroke:0">54.00</div>
<div class="m" style="right:1900px;top:831.6px;-webkit-text-stroke:0">34.00</div>
<div class="m" style="right:1900px;top:878.0px;-webkit-text-stroke:0">14.00</div>
<div class="m" style="left:70.0px;top:893px;-webkit-text-stroke:0">0:00:00</div>
<div class="m" style="left:278.5px;top:893px;-webkit-text-stroke:0">0:00:00.2</div>
<div class="m" style="left:496.0px;top:893px;-webkit-text-stroke:0">0:00:00.4</div>
<div class="m" style="left:713.5px;top:893px;-webkit-text-stroke:0">0:00:00.6</div>
<div class="m" style="left:931.0px;top:893px;-webkit-text-stroke:0">0:00:00.8</div>
<div class="m" style="left:1148.5px;top:893px;-webkit-text-stroke:0">0:00:00.0</div>
<div class="m" style="left:1366.0px;top:893px;-webkit-text-stroke:0">0:00:01.2</div>
<div class="m" style="left:1474.8px;top:893px;-webkit-text-stroke:0">0:00:01.3</div>
<div class="m" style="left:691px;top:921px;font-size:17.5px;letter-spacing:-0.1px">Elapsed time (h:mm:ss)</div>
<div class="a" style="left:16px;top:462px;font-family:'Liberation Serif',serif;font-size:29px;line-height:27px;transform:scaleX(1.066);transform-origin:0 0;color:#000">Throughput</div>
<div class="m" style="left:13.5px;top:717px;font-size:18px;letter-spacing:0.4px;transform:rotate(-90deg);transform-origin:0 0">Mbps</div>
<div class="a" style="left:1596px;top:448px;width:389px;height:33px;background:#fff"></div>
<div class="a" style="left:1596px;top:481px;width:389px;height:2px;background:#6a6a6a"></div>
<div class="a" style="left:1593.5px;top:448px;width:2px;height:497px;background:#7a7a7a"></div>
<div class="a" style="left:1596px;top:456px;width:389px;text-align:center;font-family:'Liberation Sans',sans-serif;font-weight:bold;font-size:20px;line-height:20px;color:#000;padding-left:3px">Legend</div>
<div class="a" style="left:1965px;top:483px;width:20px;height:462px;background:#f0f0f0"></div>
<div class="a" style="left:1596px;top:923px;width:389px;height:22px;background:#f0f0f0"></div>
<div class="a" style="left:1607px;top:489px;width:28px;height:1.6px;background:#ff0000"></div>
<div class="m" style="left:1641px;top:484.0px;color:#ff0000;-webkit-text-stroke:0">Pair 1</div>
<div class="a" style="left:1607px;top:506px;width:28px;height:1.6px;background:#00ff00"></div>
<div class="m" style="left:1641px;top:500.5px;color:#00ff00;-webkit-text-stroke:0">Pair 2</div>
<div class="a" style="left:1607px;top:522px;width:28px;height:1.6px;background:#ff00ff"></div>
<div class="m" style="left:1641px;top:517.0px;color:#ff00ff;-webkit-text-stroke:0">Pair 3</div>
<div class="a" style="left:1607px;top:539px;width:28px;height:1.6px;background:#00ffff"></div>
<div class="m" style="left:1641px;top:533.4px;color:#00ffff;-webkit-text-stroke:0">Pair 4</div>
<div class="a" style="left:1607px;top:555px;width:28px;height:1.6px;background:#000000"></div>
<div class="m" style="left:1641px;top:549.9px;color:#000000;-webkit-text-stroke:0">Pair 5</div>
<div class="a" style="left:1607px;top:572px;width:28px;height:1.6px;background:#808000"></div>
<div class="m" style="left:1641px;top:566.4px;color:#808000;-webkit-text-stroke:0">Pair 6</div>
<div class="a" style="left:1607px;top:588px;width:28px;height:1.6px;background:#b08040"></div>
<div class="m" style="left:1641px;top:582.9px;color:#b08040;-webkit-text-stroke:0">Pair 7</div>
<div class="a" style="left:1607px;top:605px;width:28px;height:1.6px;background:#0000a0"></div>
<div class="m" style="left:1641px;top:599.4px;color:#0000a0;-webkit-text-stroke:0">Pair 8</div>
<div class="a" style="left:1607px;top:621px;width:28px;height:1.6px;background:#80a000"></div>
<div class="m" style="left:1641px;top:615.8px;color:#80a000;-webkit-text-stroke:0">Pair 9</div>
<div class="a" style="left:1607px;top:638px;width:28px;height:1.6px;background:#8000c0"></div>
<div class="m" style="left:1641px;top:632.3px;color:#8000c0;-webkit-text-stroke:0">Pair 10</div>
<svg class="a" style="left:0;top:0" width="1985" height="945"><path d="M16,417 L10,422 L16,427" fill="none" stroke="#b4b4b4" stroke-width="2.4"/><path d="M1948,417 L1954,422 L1948,427" fill="none" stroke="#b4b4b4" stroke-width="2.4"/><path d="M1970,43 L1976,37 L1982,43" fill="none" stroke="#b4b4b4" stroke-width="2.4"/><path d="M1970,394 L1976,400 L1982,394" fill="none" stroke="#b4b4b4" stroke-width="2.4"/><path d="M1970,498 L1976,492 L1982,498" fill="none" stroke="#b4b4b4" stroke-width="2.4"/><path d="M1970,907 L1976,913 L1982,907" fill="none" stroke="#b4b4b4" stroke-width="2.4"/><path d="M1615,930 L1609,935 L1615,940" fill="none" stroke="#b4b4b4" stroke-width="2.4"/><path d="M1948,930 L1954,935 L1948,940" fill="none" stroke="#b4b4b4" stroke-width="2.4"/></svg>
</body></html>
